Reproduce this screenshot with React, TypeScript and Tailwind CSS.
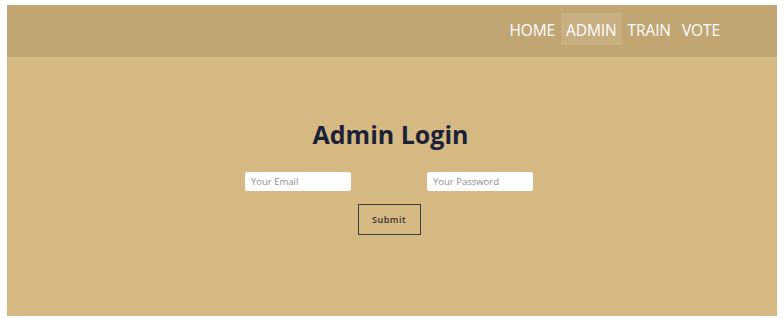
import React from "react";

export default function App() {
  const nav = ["HOME", "ADMIN", "TRAIN", "VOTE"];
  return (
    <div className="w-[784px] h-[328px] bg-white pl-[7px] pr-[7px] pt-[5px] pb-[12px]" style={{ fontFamily: '"Open Sans", "Noto Sans", sans-serif' }}>
      <div className="w-full h-full flex flex-col bg-[#d6b982]">
        <header className="h-[52px] bg-[#c1a674] flex justify-end items-start pt-[8px] pr-[52px]">
          <nav className="flex gap-[1px]">
            {nav.map((n) => (
              <a
                key={n}
                className={
                  "h-[32px] px-[5px] pt-[3px] flex items-center text-[15.5px] tracking-[-0.1px] text-white leading-none " +
                  (n === "ADMIN" ? "bg-[#c7af82]" : "")
                }
              >
                {n}
              </a>
            ))}
          </nav>
        </header>
        <main className="flex flex-col items-center pt-[58px]">
          <h1 className="text-[25px] font-bold text-[#1b2238] leading-[38px] mr-[3px]">Admin Login</h1>
          <div className="flex gap-[76px] mt-[19px] mr-[6px]">
            <input
              className="w-[106px] h-[19px] bg-white rounded-[2px] px-[6px] text-[9.5px] text-[#555] placeholder:text-[#8b8f97] outline-none"
              placeholder="Your Email"
            />
            <input
              className="w-[106px] h-[19px] bg-white rounded-[2px] px-[6px] text-[9.5px] text-[#555] placeholder:text-[#8b8f97] outline-none"
              placeholder="Your Password"
            />
          </div>
          <button className="mt-[13px] mr-[6px] w-[63px] h-[31px] border border-[#3d3d3d] text-[9px] font-semibold tracking-[0.5px] text-[#333]">
            Submit
          </button>
        </main>
      </div>
    </div>
  );
}
